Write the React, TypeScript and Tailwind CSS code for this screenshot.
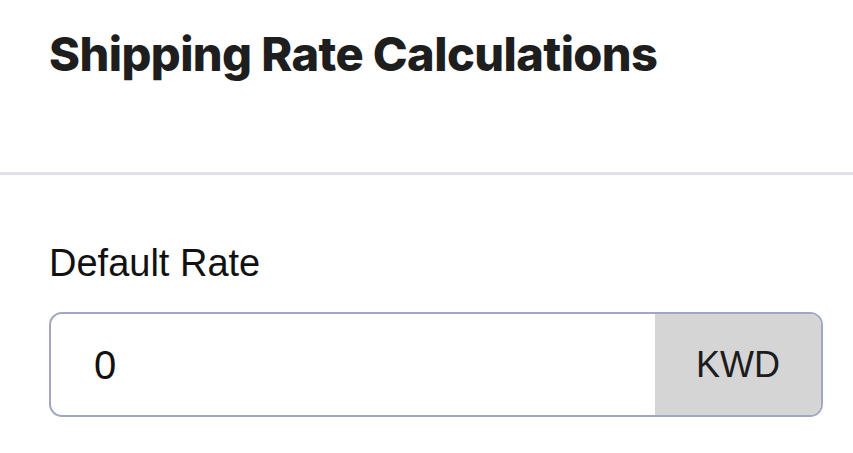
export default function App() {
  return (
    <div className="w-[853px] h-[453px] bg-white overflow-hidden" style={{ fontFamily: '"Liberation Sans", Arial, sans-serif' }}>
      <div className="px-[49px] pt-[24px] h-[172px]">
        <h1 className="text-[47px] leading-[60px] font-extrabold tracking-[-0.6px] text-[#1e1e1e]" style={{ fontFamily: 'Inter, "Liberation Sans", sans-serif' }}>
          Shipping Rate Calculations
        </h1>
      </div>
      <div className="h-[3px] bg-[#e0e1ea]" />
      <div className="px-[49px] pt-[66px]">
        <div className="text-[38px] leading-[44px] text-[#111]">Default Rate</div>
        <div className="mt-[27px] flex h-[105px] w-[774px] border-2 border-[#a1a7c2] rounded-[13px] overflow-hidden">
          <div className="flex-1 flex items-center pl-[43px] text-[40px] text-[#111]">0</div>
          <div className="w-[166px] bg-[#d5d5d5] flex items-center justify-center text-[36px] text-[#1c1c1c]">KWD</div>
        </div>
      </div>
    </div>
  );
}
